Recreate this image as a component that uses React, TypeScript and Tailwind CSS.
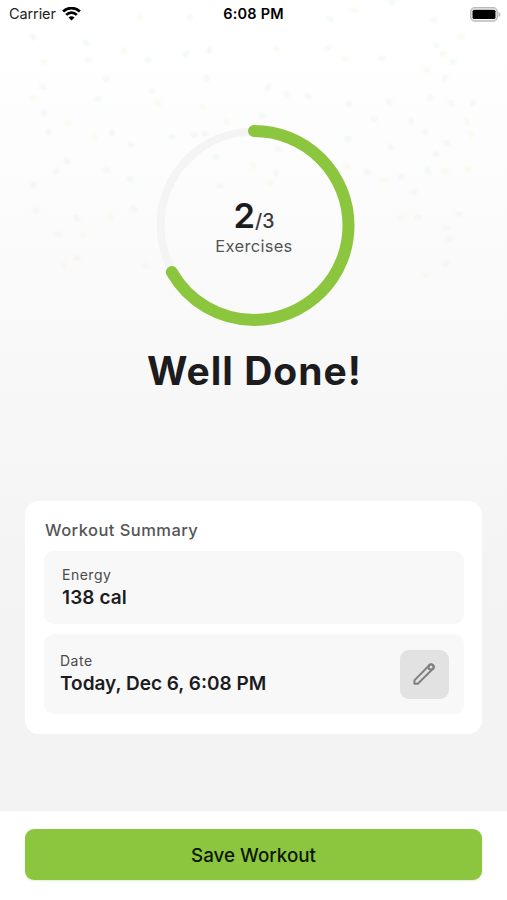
type Speck = [number, number, string, number];

const MINT = '#dff1ee';
const SAND = '#f8f2dc';
const ROSE = '#f7e9e5';
const GRAY = '#e9eef0';

// x, y, colour, rotation
const confetti: Speck[] = [
  [33, 37, MINT, 50], [86, 43, MINT, 60], [89, 60, ROSE, 10], [44, 62, SAND, 0],
  [124, 51, SAND, 80], [148, 60, MINT, 0], [186, 54, MINT, 120], [209, 50, ROSE, 110],
  [140, 18, SAND, 60], [190, 17, GRAY, 90], [106, 79, GRAY, 0], [98, 99, MINT, 0],
  [152, 91, GRAY, 50], [158, 103, SAND, 70], [203, 107, SAND, 30], [43, 87, GRAY, 20],
  [33, 98, SAND, 0], [44, 113, GRAY, 60], [207, 78, GRAY, 90], [49, 132, MINT, 90],
  [68, 123, SAND, 0], [112, 133, MINT, 90], [95, 138, SAND, 80], [131, 145, GRAY, 10],
  [172, 137, MINT, 10], [194, 135, GRAY, 0], [205, 134, GRAY, 30], [216, 157, MINT, 0],
  [67, 161, GRAY, 30], [56, 171, ROSE, 140], [106, 170, ROSE, 0], [130, 179, MINT, 20],
  [33, 185, MINT, 130], [36, 211, ROSE, 150], [77, 218, GRAY, 50], [111, 217, SAND, 70],
  [134, 209, ROSE, 20], [58, 234, ROSE, 0], [83, 235, SAND, 30], [64, 266, SAND, 70],
  [77, 258, ROSE, 0], [145, 266, ROSE, 0], [220, 186, ROSE, 10], [227, 122, SAND, 20],
  [330, 19, MINT, 35], [354, 10, SAND, 10], [392, 2, MINT, 0], [434, 20, ROSE, 0],
  [276, 48, SAND, 20], [328, 48, ROSE, 140], [345, 59, SAND, 0], [382, 58, GRAY, 0],
  [436, 45, MINT, 40], [443, 54, SAND, 0], [453, 62, MINT, 0], [461, 37, SAND, 0],
  [427, 70, SAND, 10], [445, 78, MINT, 130], [268, 87, ROSE, 140], [287, 94, ROSE, 50],
  [308, 96, GRAY, 40], [349, 104, GRAY, 0], [389, 102, ROSE, 40], [430, 98, GRAY, 120],
  [451, 103, ROSE, 0], [473, 103, GRAY, 110], [262, 116, MINT, 0], [374, 119, GRAY, 0],
  [411, 121, GRAY, 80], [425, 132, GRAY, 30], [467, 122, SAND, 70], [471, 134, SAND, 50],
  [348, 139, MINT, 10], [447, 143, MINT, 0], [391, 147, ROSE, 60], [436, 154, GRAY, 30],
  [367, 172, MINT, 30], [347, 167, SAND, 0], [428, 171, MINT, 70], [445, 171, SAND, 0],
  [401, 177, GRAY, 140], [384, 180, SAND, 0], [468, 169, SAND, 40], [414, 192, GRAY, 0],
  [401, 218, SAND, 150], [459, 214, GRAY, 0], [446, 228, GRAY, 0], [449, 239, GRAY, 0],
  [446, 264, GRAY, 120], [425, 275, SAND, 0], [270, 183, SAND, 0], [276, 173, GRAY, 80],
  [278, 149, ROSE, 20], [418, 217, GRAY, 0], [253, 166, SAND, 60],
];

const Confetti = () => (
  <svg className="pointer-events-none absolute inset-x-0 top-0 h-75 w-full opacity-40 blur-[1px]" viewBox="0 0 507 300">
    {confetti.map(([x, y, fill, angle]) => (
      <rect
        key={`${x}-${y}`}
        x={x - 3.5}
        y={y - 2.5}
        width="7"
        height="5"
        rx="1.5"
        fill={fill}
        transform={`rotate(${angle} ${x} ${y})`}
      />
    ))}
  </svg>
);

const WifiIcon = () => (
  <svg className="ml-[6px] h-[15px] w-[19px]" viewBox="0 0 19 15" fill="none" stroke="#000" strokeWidth="2.7">
    <path d="M1.1 4.5a12 12 0 0 1 16.8 0" />
    <path d="M4.2 7.9a7.5 7.5 0 0 1 10.6 0" />
    <path d="M9.5 13.5l-3-3a4.2 4.2 0 0 1 6 0z" fill="#000" stroke="none" />
  </svg>
);

const BatteryIcon = () => (
  <svg className="h-[15px] w-[31px]" viewBox="0 0 31 15">
    <rect x="0.8" y="0.8" width="26.4" height="13.2" rx="4" fill="#fff" stroke="#b9b9b9" strokeWidth="1.5" />
    <rect x="2.5" y="2.7" width="23" height="9.4" rx="1.5" fill="#000" />
    <path d="M28.5 5v5c1.3-.5 2-1.3 2-2.5s-.7-2-2-2.5z" fill="#b9b9b9" />
  </svg>
);

const StatusBar = () => (
  <header className="relative grid h-7 grid-cols-3 items-center pr-1.5 pl-[9px] text-black">
    <div className="flex items-center">
      <span className="text-[14.5px] tracking-[-0.1px] text-[#222]">Carrier</span>
      <WifiIcon />
    </div>
    <span className="pr-[3px] text-center text-[14.5px] font-semibold tracking-[0.2px]">6:08 PM</span>
    <div className="flex justify-end">
      <BatteryIcon />
    </div>
  </header>
);

const RADIUS = 94.5;
const CIRCUMFERENCE = 2 * Math.PI * RADIUS;

const ProgressRing = ({ done, total }: { done: number; total: number }) => (
  <div className="relative mt-24 ml-[153px] size-[202px]">
    <svg className="size-full -rotate-90" viewBox="0 0 202 202" fill="none">
      <circle cx="101" cy="101" r="93.5" stroke="#f4f4f5" strokeWidth="8" />
      <circle
        cx="100.5"
        cy="101"
        r={RADIUS}
        stroke="#8cc63f"
        strokeWidth="12"
        strokeLinecap="round"
        strokeDasharray={`${(CIRCUMFERENCE * done) / total} ${CIRCUMFERENCE}`}
      />
    </svg>
    <div className="absolute inset-0 flex flex-col items-center pt-[76px]">
      <p className="flex h-8 items-baseline leading-8 font-semibold text-[#1c1c1e]">
        <span className="text-[34.5px]">{done}</span>
        <span className="text-[19.5px] leading-5 font-medium text-[#3a3a3c]">/{total}</span>
      </p>
      <p className="mt-1 text-[16.5px] leading-5 tracking-[0.3px] text-[#555]">Exercises</p>
    </div>
  </div>
);

// Long thin body with a round eraser
const PencilIcon = () => (
  <svg
    className="mr-0.5 size-6"
    viewBox="0 0 24 24"
    fill="none"
    stroke="#808080"
    strokeWidth="2"
    strokeLinecap="round"
    strokeLinejoin="round"
  >
    <path d="M2.4 21.8v-3.4L17.3 3.2a2.5 2.5 0 0 1 3.6 3.6L5.8 21.8z" />
    <circle cx="19.1" cy="5" r="2.6" />
  </svg>
);

const SummaryCard = () => (
  <section className="mx-[25px] mt-[106px] h-[233px] rounded-[14px] bg-white pt-[19px] pr-[18px] pl-[19px]">
    <h2 className="pl-px text-[16.5px] leading-5 font-medium tracking-[0.45px] text-[#555]">Workout Summary</h2>
    <div className="mt-[11px] h-[73px] rounded-[10px] bg-[#f8f8f8] px-[18px] pt-[15px]">
      <p className="text-[14px] leading-[18px] tracking-[0.5px] text-[#4a4a4a]">Energy</p>
      <p className="text-[19px] leading-7 font-semibold tracking-[0.1px] text-[#1c1c1e]">138 cal</p>
    </div>
    <div className="mt-2.5 flex h-20 items-center justify-between rounded-[10px] bg-[#f8f8f8] pr-[15px] pl-4">
      <div className="pt-[2px]">
        <p className="text-[14px] leading-[18px] tracking-[0.5px] text-[#4a4a4a]">Date</p>
        <p className="text-[19px] leading-7 font-semibold text-[#1c1c1e]">Today, Dec 6, 6:08 PM</p>
      </div>
      <button className="flex size-[49px] items-center justify-center rounded-[9px] bg-[#e2e2e2]" aria-label="Edit date">
        <PencilIcon />
      </button>
    </div>
  </section>
);

const App = () => {
  return (
    <div className="flex h-[900px] w-[507px] flex-col overflow-hidden bg-white font-[Inter,sans-serif]">
      <main className="relative h-[811px] bg-linear-to-b from-white from-5% to-[#f3f3f3] to-75%">
        <Confetti />
        <StatusBar />
        <ProgressRing done={2} total={3} />
        <h1 className="mt-[21px] pl-0.5 text-center text-[39px] leading-12 font-bold tracking-[1px] text-[#1c1c1e]">
          Well Done!
        </h1>
        <SummaryCard />
      </main>
      <footer className="flex-1 bg-white px-[25px] pt-[18px]">
        <button className="h-[51px] w-full rounded-[9px] bg-[#8cc63f] pt-[3px] text-[18.8px] font-medium text-[#0c1605] shadow-[0_1px_2px_#8cc63f44]">
          Save Workout
        </button>
      </footer>
    </div>
  );
};

export default App;
